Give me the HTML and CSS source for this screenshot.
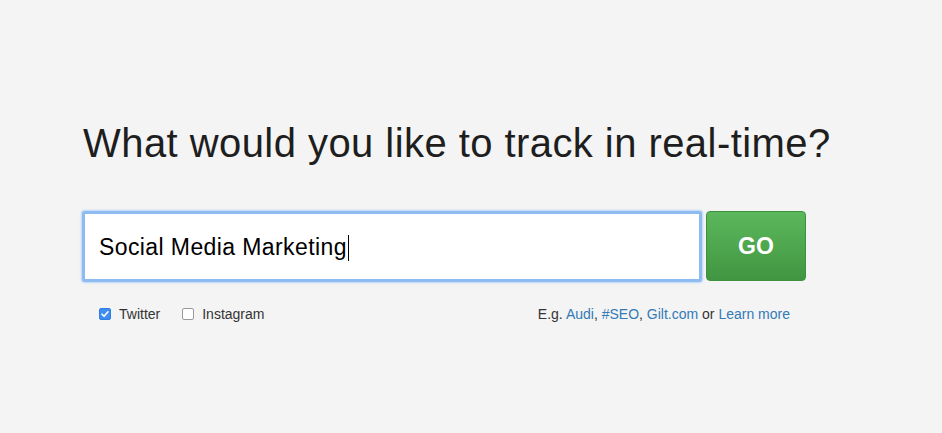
FILE: index.html
```html
<!DOCTYPE html>
<html>
<head>
<meta charset="utf-8">
<link rel="stylesheet" href="styles.css">
</head>
<body>
<div class="wrap">
  <h1 class="title">What would you like to track in real-time?</h1>
  <div class="search-row">
    <div class="input-box"><span class="value">Social Media Marketing</span><span class="caret"></span></div>
    <button class="go">GO</button>
  </div>
  <div class="options">
    <div class="sources">
      <label class="opt"><span class="cb checked"><svg viewBox="0 0 12 12" width="12" height="12"><path d="M3 6.2 L5.1 8.3 L9 3.8" fill="none" stroke="#fff" stroke-width="1.6" stroke-linecap="round" stroke-linejoin="round"/></svg></span>Twitter</label>
      <label class="opt"><span class="cb"></span>Instagram</label>
    </div>
    <div class="examples">E.g. <a>Audi</a>, <a>#SEO</a>, <a>Gilt.com</a> or <a>Learn more</a></div>
  </div>
</div>
</body>
</html>
```
FILE: styles.css
```css
html, body {
  margin: 0;
  padding: 0;
  background: #f4f4f4;
  font-family: "Liberation Sans", Arial, sans-serif;
  color: #222;
}
.wrap {
  width: 724px;
  padding: 113px 0 0 82px;
}
.title {
  margin: 0 0 0 1px;
  font-weight: normal;
  font-size: 40px;
  line-height: 60px;
  letter-spacing: 0.44px;
  color: #1e1e1e;
  white-space: nowrap;
}
.search-row {
  display: flex;
  gap: 4px;
  margin-top: 38px;
}
.input-box {
  box-sizing: border-box;
  width: 620px;
  height: 71px;
  background: #fff;
  border: 3px solid #8ebcf2;
  border-radius: 3px;
  box-shadow: 0 0 2px 1px #b9d6f7;
  display: flex;
  align-items: center;
  padding-left: 14px;
  padding-top: 2px;
  font-size: 23px;
  letter-spacing: 0.4px;
  color: #000;
}
.caret {
  display: inline-block;
  width: 1px;
  height: 26px;
  background: #000;
  margin-left: 1px;
}
.go {
  box-sizing: border-box;
  width: 100px;
  height: 70px;
  border: 1px solid #3e8f3e;
  border-radius: 4px;
  background: linear-gradient(#5cb85c, #419641);
  color: #fff;
  font-family: "Liberation Sans", Arial, sans-serif;
  font-weight: bold;
  font-size: 23px;
  padding: 0;
}
.options {
  display: flex;
  justify-content: space-between;
  align-items: center;
  margin-top: 24px;
  padding: 0 16px 0 17px;
  font-size: 14px;
}
.sources {
  display: flex;
  gap: 22px;
}
.opt {
  display: flex;
  align-items: center;
  color: #333;
}
.cb {
  box-sizing: border-box;
  width: 12px;
  height: 12px;
  border: 1px solid #9a9a9a;
  border-radius: 2px;
  background: #fff;
  margin-right: 8px;
  display: flex;
}
.cb.checked {
  background: #3d8ef0;
  border-color: #2f7de0;
}
.cb svg { display: block; margin: -1px; }
.examples {
  color: #333;
}
.examples a {
  color: #337ab7;
}
```
